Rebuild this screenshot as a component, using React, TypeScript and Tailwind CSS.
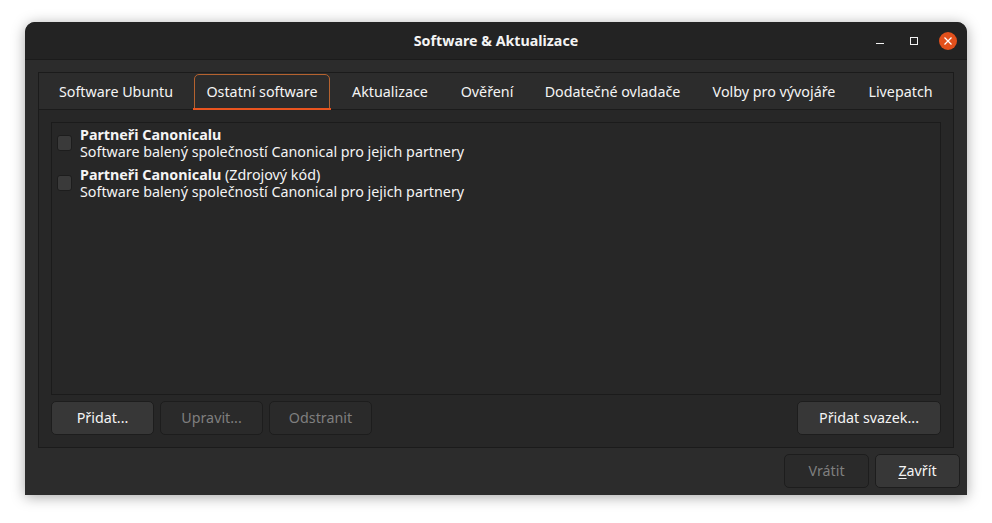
const font = "[font-family:'Noto_Sans',sans-serif]";

const tabs = [
  { t: "Software Ubuntu", w: "w-[146px]" },
  { t: "Ostatní software", w: "w-[136px] mx-[5px]" },
  { t: "Aktualizace", w: "w-[110px]" },
  { t: "Ověření", w: "w-[84px]" },
  { t: "Dodatečné ovladače", w: "w-[167px]" },
  { t: "Volby pro vývojáře", w: "w-[156px]" },
  { t: "Livepatch", w: "w-[97px]" },
];

function Btn({ w, disabled, children }: { w: string; disabled?: boolean; children: React.ReactNode }) {
  return (
    <div
      className={`${w} h-[34px] pb-[2px] flex items-center justify-center rounded-[5px] border border-[#1d1d1d] text-[14.3px] leading-[17px] ${
        disabled ? "bg-[#2a2a2a] text-[#7f7f7f]" : "bg-[#373737] text-[#f4f4f4]"
      }`}
    >
      {children}
    </div>
  );
}

function Row({ extra }: { extra?: string }) {
  return (
    <div className="flex items-center h-[40px] pl-[5px]">
      <div className="w-[15px] h-[16px] -mt-[2px] rounded-[3px] border border-[#1d1d1d] bg-[#3a3a3a]" />
      <div className="ml-[8px] text-[14.3px] leading-[17px] text-[#f4f4f4] -mt-[2px]">
        <div>
          <b className="font-bold">Partneři Canonicalu</b>
          {extra ? ` ${extra}` : ""}
        </div>
        <div>Software balený společností Canonical pro jejich partnery</div>
      </div>
    </div>
  );
}

export default function App() {
  return (
    <div className={`${font} w-[992px] h-[523px] bg-white pt-[22px] pl-[25px] overflow-hidden`}>
      <div className="w-[942px] h-[473px] flex flex-col bg-[#2c2c2c] rounded-t-[10px] shadow-[0_2px_14px_rgba(0,0,0,0.35)]">
        <div className="relative h-[38px] shrink-0 flex items-center justify-center bg-[#232323] border-b border-[#1b1b1b] rounded-t-[10px]">
          <span className="text-[14.25px] font-bold text-[#f4f4f4]">Software & Aktualizace</span>
          <div className="absolute right-[10px] top-[10px] flex items-center">
            <svg width="18" height="18" viewBox="0 0 18 18" className="mr-[16px]">
              <rect x="5" y="11" width="8" height="1" fill="#f2f2f2" />
            </svg>
            <svg width="18" height="18" viewBox="0 0 18 18" className="mr-[16px]">
              <rect x="5.5" y="5.5" width="7" height="7" fill="none" stroke="#f2f2f2" />
            </svg>
            <svg width="18" height="18" viewBox="0 0 18 18">
              <circle cx="9" cy="9" r="9" fill="#e2501c" />
              <path d="M5.5 5.5 12.5 12.5M12.5 5.5 5.5 12.5" stroke="#fff" strokeWidth="1.3" />
            </svg>
          </div>
        </div>

        <div className="flex-1 flex flex-col pt-[12px] px-[13px]">
          <div className="w-[916px] h-[376px] shrink-0 flex flex-col border border-[#1b1b1b] bg-[#272727]">
            <div className="h-[37px] shrink-0 flex items-stretch pl-[4px] bg-[#2c2c2c] border-b border-[#1b1b1b]">
              {tabs.map(({ t, w }, i) => (
                <div
                  key={t}
                  className={`relative pt-[1px] flex items-center justify-center whitespace-nowrap text-[14.3px] text-[#f4f4f4] ${w}`}
                >
                  {t}
                  {i === 1 && (
                    <>
                      <div className="absolute inset-x-0 top-[1px] bottom-[-1px] rounded-t-[5px] border border-[#b5622f]" />
                      <div className="absolute -inset-x-[1px] bottom-[-1px] h-[2px] bg-[#e9541f]" />
                    </>
                  )}
                </div>
              ))}
            </div>
            <div className="flex-1 flex flex-col p-[12px]">
              <div className="h-[273px] shrink-0 border border-[#1b1b1b] bg-[#272727] pt-[1px]">
                <Row />
                <Row extra="(Zdrojový kód)" />
              </div>
              <div className="flex items-center mt-[6px] gap-[6px]">
                <Btn w="w-[103px]">Přidat...</Btn>
                <Btn w="w-[103px]" disabled>Upravit...</Btn>
                <Btn w="w-[103px]" disabled>Odstranit</Btn>
                <div className="flex-1" />
                <Btn w="w-[144px]">Přidat svazek...</Btn>
              </div>
            </div>
          </div>
          <div className="flex justify-end gap-[6px] mt-[6px] -mr-[6px]">
            <Btn w="w-[85px]" disabled>Vrátit</Btn>
            <Btn w="w-[85px]"><span><u className="underline-offset-2">Z</u>avřít</span></Btn>
          </div>
        </div>
      </div>
    </div>
  );
}
